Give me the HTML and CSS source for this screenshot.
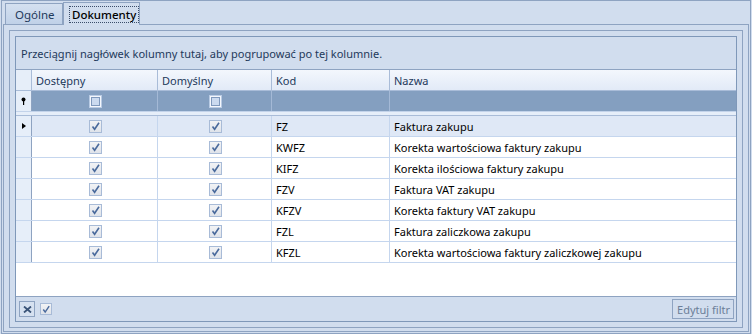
FILE: index.html
```html
<!DOCTYPE html>
<html lang="pl">
<head>
<meta charset="utf-8">
<title>Dokumenty</title>
<link rel="stylesheet" href="styles.css">
</head>
<body>
<div class="frame">
  <div class="tabs">
    <div class="tab">Ogólne</div>
    <div class="tab active"><span class="focus">Dokumenty</span></div>
  </div>
  <div class="page">
    <div class="panel">
      <div class="grid">
        <div class="group">Przeciągnij nagłówek kolumny tutaj, aby pogrupować po tej kolumnie.</div>
        <div class="row head">
          <div class="ind"></div>
          <div class="cell">Dostępny</div>
          <div class="cell">Domyślny</div>
          <div class="cell">Kod</div>
          <div class="cell last">Nazwa</div>
        </div>
        <div class="row filter">
          <div class="ind"><svg width="5" height="9" viewBox="0 0 5 9"><circle cx="2.5" cy="2.5" r="2" fill="#000"/><rect x="2" y="3" width="1.2" height="5" fill="#000"/></svg></div>
          <div class="cell center"><span class="cb empty"></span></div>
          <div class="cell center"><span class="cb empty"></span></div>
          <div class="cell"></div>
          <div class="cell last"></div>
        </div>
        <div class="sep"></div>
        <div class="rows">
          <div class="row data focused">
            <div class="ind"><span class="arrow"></span></div>
            <div class="cell center"><span class="cb"><svg width="11" height="11" viewBox="0 0 11 11"><path d="M2.5 5.5 L4.6 8.3 L9 1.8" fill="none" stroke="#4a6a9c" stroke-width="1.6"/></svg></span></div>
            <div class="cell center"><span class="cb"><svg width="11" height="11" viewBox="0 0 11 11"><path d="M2.5 5.5 L4.6 8.3 L9 1.8" fill="none" stroke="#4a6a9c" stroke-width="1.6"/></svg></span></div>
            <div class="cell">FZ</div>
            <div class="cell last">Faktura zakupu</div>
          </div>
          <div class="row data">
            <div class="ind"></div>
            <div class="cell center"><span class="cb"><svg width="11" height="11" viewBox="0 0 11 11"><path d="M2.5 5.5 L4.6 8.3 L9 1.8" fill="none" stroke="#4a6a9c" stroke-width="1.6"/></svg></span></div>
            <div class="cell center"><span class="cb"><svg width="11" height="11" viewBox="0 0 11 11"><path d="M2.5 5.5 L4.6 8.3 L9 1.8" fill="none" stroke="#4a6a9c" stroke-width="1.6"/></svg></span></div>
            <div class="cell">KWFZ</div>
            <div class="cell last">Korekta wartościowa faktury zakupu</div>
          </div>
          <div class="row data">
            <div class="ind"></div>
            <div class="cell center"><span class="cb"><svg width="11" height="11" viewBox="0 0 11 11"><path d="M2.5 5.5 L4.6 8.3 L9 1.8" fill="none" stroke="#4a6a9c" stroke-width="1.6"/></svg></span></div>
            <div class="cell center"><span class="cb"><svg width="11" height="11" viewBox="0 0 11 11"><path d="M2.5 5.5 L4.6 8.3 L9 1.8" fill="none" stroke="#4a6a9c" stroke-width="1.6"/></svg></span></div>
            <div class="cell">KIFZ</div>
            <div class="cell last">Korekta ilościowa faktury zakupu</div>
          </div>
          <div class="row data">
            <div class="ind"></div>
            <div class="cell center"><span class="cb"><svg width="11" height="11" viewBox="0 0 11 11"><path d="M2.5 5.5 L4.6 8.3 L9 1.8" fill="none" stroke="#4a6a9c" stroke-width="1.6"/></svg></span></div>
            <div class="cell center"><span class="cb"><svg width="11" height="11" viewBox="0 0 11 11"><path d="M2.5 5.5 L4.6 8.3 L9 1.8" fill="none" stroke="#4a6a9c" stroke-width="1.6"/></svg></span></div>
            <div class="cell">FZV</div>
            <div class="cell last">Faktura VAT zakupu</div>
          </div>
          <div class="row data">
            <div class="ind"></div>
            <div class="cell center"><span class="cb"><svg width="11" height="11" viewBox="0 0 11 11"><path d="M2.5 5.5 L4.6 8.3 L9 1.8" fill="none" stroke="#4a6a9c" stroke-width="1.6"/></svg></span></div>
            <div class="cell center"><span class="cb"><svg width="11" height="11" viewBox="0 0 11 11"><path d="M2.5 5.5 L4.6 8.3 L9 1.8" fill="none" stroke="#4a6a9c" stroke-width="1.6"/></svg></span></div>
            <div class="cell">KFZV</div>
            <div class="cell last">Korekta faktury VAT zakupu</div>
          </div>
          <div class="row data">
            <div class="ind"></div>
            <div class="cell center"><span class="cb"><svg width="11" height="11" viewBox="0 0 11 11"><path d="M2.5 5.5 L4.6 8.3 L9 1.8" fill="none" stroke="#4a6a9c" stroke-width="1.6"/></svg></span></div>
            <div class="cell center"><span class="cb"><svg width="11" height="11" viewBox="0 0 11 11"><path d="M2.5 5.5 L4.6 8.3 L9 1.8" fill="none" stroke="#4a6a9c" stroke-width="1.6"/></svg></span></div>
            <div class="cell">FZL</div>
            <div class="cell last">Faktura zaliczkowa zakupu</div>
          </div>
          <div class="row data">
            <div class="ind"></div>
            <div class="cell center"><span class="cb"><svg width="11" height="11" viewBox="0 0 11 11"><path d="M2.5 5.5 L4.6 8.3 L9 1.8" fill="none" stroke="#4a6a9c" stroke-width="1.6"/></svg></span></div>
            <div class="cell center"><span class="cb"><svg width="11" height="11" viewBox="0 0 11 11"><path d="M2.5 5.5 L4.6 8.3 L9 1.8" fill="none" stroke="#4a6a9c" stroke-width="1.6"/></svg></span></div>
            <div class="cell">KFZL</div>
            <div class="cell last">Korekta wartościowa faktury zaliczkowej zakupu</div>
          </div>
        </div>
        <div class="footer">
          <span class="xbtn"><svg width="9" height="7" viewBox="0 0 9 7"><path d="M1 0.5 L8 6.5 M8 0.5 L1 6.5" stroke="#3a5478" stroke-width="1.8"/></svg></span>
          <span class="cb small"><svg width="11" height="11" viewBox="0 0 11 11"><path d="M2.5 5.5 L4.6 8.3 L9 1.8" fill="none" stroke="#4a6a9c" stroke-width="1.6"/></svg></span>
          <span class="spacer"></span>
          <span class="editbtn">Edytuj filtr</span>
        </div>
      </div>
    </div>
  </div>
</div>
</body>
</html>
```
FILE: styles.css
```css
* { box-sizing: border-box; }
html, body { margin: 0; padding: 0; }
body {
  width: 752px;
  height: 334px;
  background: #d1ddee;
  font-family: "Noto Sans", "Open Sans", sans-serif;
  font-size: 11px;
  color: #000;
  overflow: hidden;
}
.frame {
  margin-left: 1px;
  width: 750px;
  height: 334px;
  border: 1px solid #8ea3c1;
  background: #d1ddee;
  display: flex;
  flex-direction: column;
}
.tabs {
  height: 23px;
  display: flex;
  align-items: flex-end;
  padding-left: 3px;
}
.tab {
  height: 21px;
  padding: 0 9px 0 9px;
  display: flex;
  align-items: center;
  color: #1e395b;
  background: linear-gradient(#d4e0f0, #c0d1e8);
  border: 1px solid #8ea3c1;
  border-bottom: none;
  width: 58px;
  font-size: 11.5px;
}
.tab.active {
  height: 23px;
  width: 77px;
  background: #d1ddee;
  color: #000;
  padding: 0 5px 0 5px;
  margin-bottom: -1px;
  position: relative;
  z-index: 1;
  font-weight: 500;
}
.focus {
  border: 1px dotted #3a4d6a;
  padding: 1px 2px 1px 2px;
  line-height: 13px;
}
.page {
  flex: 1;
  margin: 0 1px 1px 1px;
  border: 1px solid #8ea3c1;
  padding: 5px 5px 3px 5px;
  display: flex;
}
.panel {
  flex: 1;
  border: 1px solid #8ea3c1;
  padding: 5px;
  display: flex;
}
.grid {
  flex: 1;
  border: 1px solid #7f98b9;
  display: flex;
  flex-direction: column;
  background: #fff;
}
.group {
  height: 33px;
  background: #d1ddee;
  border-bottom: 1px solid #8ea3c1;
  color: #1e395b;
  padding: 9px 0 0 5px;
  font-size: 11px;
}
.row {
  display: grid;
  grid-template-columns: 16px 126px 114px 118px 1fr;
}
.head {
  height: 21px;
  background: linear-gradient(#f3f7fd, #e2eaf7);
  border-bottom: 1px solid #a9bcd8;
  color: #1e395b;
}
.head .cell {
  border-right: 1px solid #a9bcd8;
  padding-left: 4px;
}
.cell {
  display: flex;
  align-items: center;
  padding-left: 4px;
  white-space: nowrap;
  overflow: hidden;
}
.cell.last { border-right: none !important; }
.cell.center { justify-content: center; padding-left: 1px; }
.ind {
  background: #e6eef9;
  border-right: 1px solid #8ea3c1;
  display: flex;
  align-items: center;
  justify-content: center;
}
.head .ind { background: #e6eef9; border-right: 1px solid #a9bcd8; }
.filter {
  height: 21px;
  background: #849fc0;
  border-bottom: 1px solid #c3d3ea;
}
.filter .cell { border-right: 1px solid #a4b9d6; }
.filter .ind { border-right: 1px solid #8ea3c1; padding-top: 1px; }
.sep {
  height: 4px;
  background: #e6eef9;
  border-bottom: 1px solid #a9bcd8;
}
.rows {
  flex: 1;
  display: flex;
  flex-direction: column;
}
.data {
  height: 21px;
  border-bottom: 1px solid #c5d6ee;
}
.data .cell { border-right: 1px solid #c5d6ee; }
.data.focused { background: #dfe8f6; }
.data .ind { border-right: 1px solid #8ea3c1; }
.arrow {
  width: 0;
  height: 0;
  border-left: 4px solid #000;
  border-top: 3.5px solid transparent;
  border-bottom: 3.5px solid transparent;
  margin-left: 1px;
}
.cb {
  width: 13px;
  height: 13px;
  border: 1px solid #a8bbd7;
  background: linear-gradient(#f2f3f5, #dfe3ea);
  display: inline-flex;
  align-items: center;
  justify-content: center;
}
.cb.empty {
  border: 1px solid #b9cbe4;
  background: #cbdaef;
  box-shadow: inset 0 0 0 1px #f4f7fc, inset 0 0 0 2px #7f99bd;
}
.footer {
  height: 25px;
  background: #d1ddee;
  border-top: 1px solid #8ea3c1;
  display: flex;
  align-items: center;
  padding: 0 2px 0 3px;
}
.xbtn {
  width: 16px;
  height: 16px;
  border: 1px solid #8ea3c1;
  background: #d6e1f0;
  display: inline-flex;
  align-items: center;
  justify-content: center;
  margin-right: 5px;
}
.cb.small { width: 12px; height: 12px; }
.spacer { flex: 1; }
.editbtn {
  height: 20px;
  padding: 0 3px 0 4px;
  border: 1px solid #8ea3c1;
  color: #6b7e98;
  display: inline-flex;
  align-items: center;
  font-size: 11px;
}
```
